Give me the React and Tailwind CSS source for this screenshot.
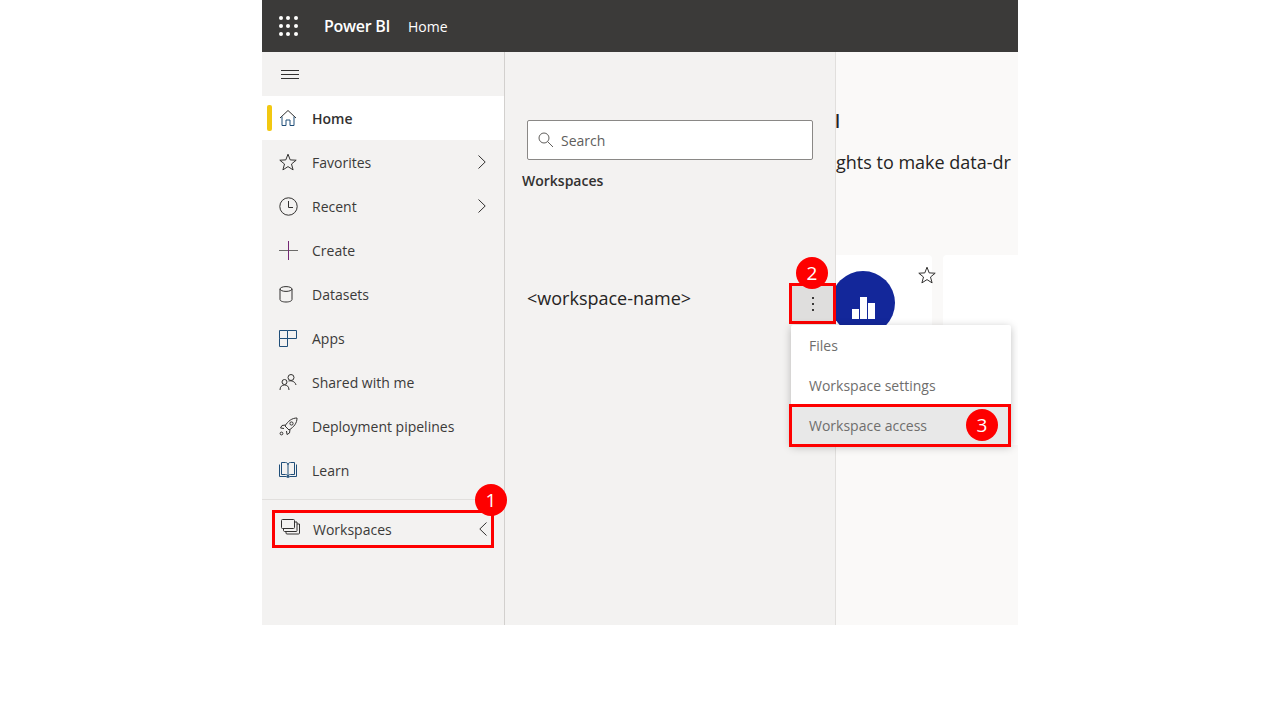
// Power BI home with the workspaces flyout open, annotated with numbered steps
import React from 'react';

const stroke = {
  fill: 'none',
  stroke: '#323130',
  strokeWidth: 1,
};

const HomeIcon = () => (
  <svg width="18" height="18" viewBox="0 0 18 18" {...stroke}>
    <path d="M1 9 L9 1.5 L17 9" />
    <path d="M3 7.5 V16.5 H7 V11 H11 V16.5 H15 V7.5" stroke="#1f4e79" />
  </svg>
);

const StarIcon = ({ size = 18 }) => (
  <svg width={size} height={size} viewBox="0 0 18 18" {...stroke}>
    <path d="M9 1.2 L11.2 6.9 L17.2 7.2 L12.5 11 L14.1 16.9 L9 13.6 L3.9 16.9 L5.5 11 L0.8 7.2 L6.8 6.9 Z" />
  </svg>
);

const ClockIcon = () => (
  <svg width="19" height="19" viewBox="0 0 19 19" {...stroke}>
    <circle cx="9.5" cy="9.5" r="8.7" />
    <path d="M9.5 4 V10.5 H14" />
  </svg>
);

const PlusIcon = () => (
  <svg width="19" height="19" viewBox="0 0 19 19" fill="none" strokeWidth="1">
    <path d="M0 9.5 H19" stroke="#6b6a69" />
    <path d="M9.5 0 V19" stroke="#742774" />
  </svg>
);

const DatasetIcon = () => (
  <svg width="14" height="17" viewBox="0 0 14 17" {...stroke}>
    <ellipse cx="7" cy="3" rx="6" ry="2.4" />
    <path d="M1 3 V13.5 C1 15 3.5 16 7 16 C10.5 16 13 15 13 13.5 V3" />
  </svg>
);

const AppsIcon = () => (
  <svg width="18" height="17" viewBox="0 0 18 17" fill="none" stroke="#1f4e79" strokeWidth="1">
    <path d="M0.5 0.5 H8.5 V8.5 H0.5 Z M8.5 0.5 H17.5 V8.5 H8.5 M0.5 8.5 V16.5 H8.5 V8.5" />
  </svg>
);

const SharedIcon = () => (
  <svg width="18" height="18" viewBox="0 0 18 18" {...stroke}>
    <circle cx="12" cy="4.5" r="3" />
    <circle cx="5.5" cy="9" r="2.5" />
    <path d="M1 17 C1 13.5 3 12 5.5 12 C8 12 10 13.5 10 17" />
    <path d="M9.5 8 C12 7.5 16 8 17 12" />
  </svg>
);

const RocketIcon = () => (
  <svg width="19" height="19" viewBox="0 0 19 19" {...stroke}>
    <path d="M18 1 C13 1 9 4 6 9 L10 13 C15 10 18 6 18 1 Z" />
    <circle cx="12.5" cy="6.5" r="1.6" />
    <path d="M6.5 8 L3 8.5 L1.5 11 L5 11.5 M11 12.5 L10.5 16 L8 17.5 L7.5 14" />
    <circle cx="2.5" cy="16.5" r="1.4" />
  </svg>
);

const BookIcon = () => (
  <svg width="18" height="17" viewBox="0 0 18 17" fill="none" stroke="#1f4e79" strokeWidth="1">
    <path d="M0.5 2.5 V14.5 H7 L9 15.5 L11 14.5 H17.5 V2.5" />
    <path d="M2.5 0.5 H6.5 C8 0.5 9 1.5 9 3 V15 C9 13.5 8 12.5 6.5 12.5 H2.5 Z" />
    <path d="M15.5 0.5 H11.5 C10 0.5 9 1.5 9 3 M15.5 0.5 V12.5 H11.5 C10 12.5 9 13.5 9 15" />
  </svg>
);

const WorkspacesIcon = () => (
  <svg width="19" height="16" viewBox="0 0 19 16" {...stroke}>
    <rect x="0.5" y="0.5" width="13" height="9" rx="1" />
    <path d="M2.5 9.5 V11.5 C2.5 12 3 12.5 3.5 12.5 H15.5 C16 12.5 16 12 16 11.5 V3 H13.5" />
    <path d="M5 12.5 V14 C5 14.7 5.3 15 6 15 H17.5 C18.2 15 18.5 14.7 18.5 14 V5 H16" />
  </svg>
);

const Chevron = ({ left }) => (
  <svg width="8" height="14" viewBox="0 0 8 14" fill="none" stroke="#323130" strokeWidth="1">
    <path d={left ? 'M7.5 0.5 L0.8 7 L7.5 13.5' : 'M0.5 0.5 L7.2 7 L0.5 13.5'} />
  </svg>
);

const WaffleIcon = () => (
  <div className="grid grid-cols-3 gap-x-[4px] gap-y-[4px] w-[18px]">
    {[0, 1, 2, 3, 4, 5, 6, 7, 8].map((dot) => (
      <span key={dot} className="w-[4px] h-[4px] rounded-full bg-white" />
    ))}
  </div>
);

const Badge = ({ n, className }) => (
  <div className={`absolute w-[32px] h-[32px] rounded-full bg-[#fe0000] text-white text-[19px] leading-[32px] text-center ${className}`}>
    {n}
  </div>
);

const navItems = [
  { label: 'Home', icon: <HomeIcon />, active: true },
  { label: 'Favorites', icon: <StarIcon />, arrow: true },
  { label: 'Recent', icon: <ClockIcon />, arrow: true },
  { label: 'Create', icon: <PlusIcon /> },
  { label: 'Datasets', icon: <DatasetIcon /> },
  { label: 'Apps', icon: <AppsIcon /> },
  { label: 'Shared with me', icon: <SharedIcon /> },
  { label: 'Deployment pipelines', icon: <RocketIcon /> },
  { label: 'Learn', icon: <BookIcon /> },
];

const NavRow = ({ item }) => (
  <div className={`relative flex items-center h-[44px] ${item.active ? 'bg-white' : ''}`}>
    {item.active && <span className="absolute left-[5px] top-[9px] w-[5px] h-[26px] rounded-[2px] bg-[#f2c811]" />}
    <span className="w-[50px] pl-[17px] flex items-center">{item.icon}</span>
    <span className={`flex-1 text-[14px] ${item.active ? 'font-semibold text-[#323130]' : 'text-[#3b3a39]'}`}>{item.label}</span>
    {item.arrow && (
      <span className="pr-[18px] flex items-center">
        <Chevron />
      </span>
    )}
  </div>
);

const App = () => {
  return (
    <div className="h-[720px] bg-white flex justify-center font-['Open_Sans',sans-serif]">
      <div className="relative w-[756px] h-[625px] flex flex-col overflow-hidden">
        <header className="h-[52px] bg-[#3b3a39] flex items-center text-white">
          <div className="w-[62px] pl-[17px]">
            <WaffleIcon />
          </div>
          <span className="text-[16px] font-semibold tracking-[-0.3px] mr-[18px]">Power BI</span>
          <span className="text-[14px]">Home</span>
        </header>

        <div className="flex flex-1 min-h-0">
          <nav className="w-[243px] bg-[#f3f2f1] border-r border-[#d2d0ce]">
            <div className="h-[44px] flex items-center pl-[19px]">
              <div className="flex flex-col gap-[3px] w-[18px]">
                <span className="h-[1px] bg-[#323130]" />
                <span className="h-[1px] bg-[#323130]" />
                <span className="h-[1px] bg-[#323130]" />
              </div>
            </div>
            {navItems.map((item) => (
              <NavRow key={item.label} item={item} />
            ))}
            <div className="h-[1px] bg-[#e1dfdd] mt-[7px]" />
            <div className="mt-[10px] ml-[10px] w-[222px] h-[38px] border-[3px] border-[#fe0000] flex items-center">
              <span className="w-[38px] pl-[6px] flex items-center -mt-[4px]">
                <WorkspacesIcon />
              </span>
              <span className="flex-1 text-[14px] text-[#3b3a39]">Workspaces</span>
              <span className="pr-[4px] flex items-center">
                <Chevron left />
              </span>
            </div>
          </nav>

          <aside className="w-[331px] bg-[#f3f2f1] border-r border-[#e1dfdd]">
            <div className="mt-[68px] ml-[22px] w-[286px] h-[40px] bg-white border border-[#8a8886] rounded-[2px] flex items-center px-[10px] gap-[7px]">
              <svg width="16" height="16" viewBox="0 0 16 16" fill="none" stroke="#605e5c" strokeWidth="1">
                <circle cx="6" cy="6" r="5" />
                <path d="M9.5 9.5 L15 15" />
              </svg>
              <span className="text-[14px] text-[#605e5c]">Search</span>
            </div>
            <div className="mt-[11px] ml-[17px] text-[14px] leading-[20px] font-semibold text-[#323130]">Workspaces</div>
            <div className="mt-[95px] ml-[22px] text-[18px] leading-[24px] text-[#252423]">&lt;workspace-name&gt;</div>
          </aside>

          <main className="flex-1 bg-[#faf9f8] overflow-hidden">
            <div className="mt-[59px] h-[20px] text-[18px] leading-[20px] text-[#252423] font-semibold -ml-[1px]">l</div>
            <div className="mt-[19px] text-[18px] leading-[24px] text-[#252423] whitespace-nowrap">ghts to make data-dr</div>
            <div className="mt-[81px] flex gap-[11px]">
              <div className="relative w-[116px] h-[190px] bg-white rounded-r-[4px]">
                <div className="absolute -left-[5px] top-[16px] w-[64px] h-[64px] rounded-full bg-[#13279a] flex items-end justify-center gap-[1px] pb-[16px]">
                  <span className="w-[7px] h-[10px] bg-white" />
                  <span className="w-[7px] h-[22px] bg-white" />
                  <span className="w-[7px] h-[16px] bg-white" />
                </div>
                <span className="absolute left-[82px] top-[11px]">
                  <StarIcon size={18} />
                </span>
              </div>
              <div className="w-[80px] h-[190px] bg-white rounded-l-[4px] pl-[48px] pt-[97px] text-[14px] leading-[22px] text-[#252423]">
                st
              </div>
            </div>
          </main>
        </div>

        {/* kebab button, highlighted in red */}
        <div className="absolute left-[527px] top-[283px] w-[47px] h-[41px] bg-[#dfdedd] border-[3px] border-[#fe0000] flex flex-col items-center justify-center gap-[4px]">
          <span className="w-[2px] h-[2px] bg-[#3b3a39]" />
          <span className="w-[2px] h-[2px] bg-[#3b3a39]" />
          <span className="w-[2px] h-[2px] bg-[#3b3a39]" />
        </div>

        {/* context menu */}
        <div className="absolute left-[529px] top-[325px] w-[220px] h-[120px] bg-white rounded-[2px] shadow-[0_2px_8px_rgba(0,0,0,0.25)] text-[14px] text-[#6f6e6d]">
          <div className="h-[40px] pl-[18px] flex items-center">Files</div>
          <div className="h-[40px] pl-[18px] flex items-center">Workspace settings</div>
        </div>
        <div className="absolute left-[527px] top-[404px] w-[222px] h-[43px] bg-[#e8e8e8] border-[3px] border-[#fe0000] pl-[17px] flex items-center text-[14px] text-[#6f6e6d]">
          Workspace access
        </div>

        <Badge n="1" className="left-[213px] top-[484px]" />
        <Badge n="2" className="left-[534px] top-[257px]" />
        <Badge n="3" className="left-[704px] top-[409px]" />
      </div>
    </div>
  );
};

export default App;
